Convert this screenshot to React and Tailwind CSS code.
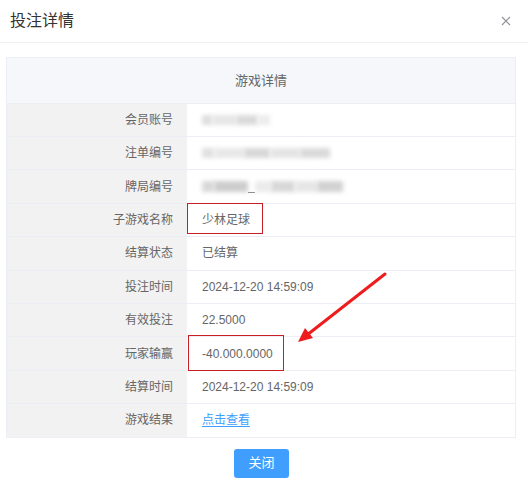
import React from "react";

const FONT = { fontFamily: '"Liberation Sans", "Noto Sans CJK SC", sans-serif' };

// blurred placeholder for masked values
const Masked = ({ parts }) => (
  <div className="flex items-center">
    {parts.map((p, i) => (
      <div
        key={i}
        className={`h-[10px] blur-[2px] ${p.c}`}
        style={{ width: p.w }}
      />
    ))}
  </div>
);

const rows = [
  {
    label: "会员账号",
    value: (
      <Masked
        parts={[
          { w: 10, c: "bg-[#dedede]" },
          { w: 24, c: "bg-[#e6e6e6]" },
          { w: 22, c: "bg-[#dadada]" },
          { w: 12, c: "bg-[#ececec]" },
        ]}
      />
    ),
  },
  {
    label: "注单编号",
    value: (
      <Masked
        parts={[
          { w: 12, c: "bg-[#e0e0e0]" },
          { w: 30, c: "bg-[#e8e8e8]" },
          { w: 26, c: "bg-[#d8d8d8]" },
          { w: 30, c: "bg-[#e4e4e4]" },
          { w: 30, c: "bg-[#dadada]" },
        ]}
      />
    ),
  },
  {
    label: "牌局编号",
    value: (
      <div className="flex items-center">
        <div className="h-[11px] w-[12px] bg-[#d8d8d8] blur-[2px]" />
        <div className="h-[11px] w-[34px] bg-[#cdcdcd] blur-[2px]" />
        <div className="mt-[12px] h-[1px] w-[7px] bg-[#8a8a8a]" />
        <div className="h-[11px] w-[16px] bg-[#ebebeb] blur-[2px]" />
        <div className="h-[11px] w-[24px] bg-[#d8d8d8] blur-[2px]" />
        <div className="h-[11px] w-[22px] bg-[#e6e6e6] blur-[2px]" />
        <div className="h-[11px] w-[26px] bg-[#d2d2d2] blur-[2px]" />
      </div>
    ),
  },
  { label: "子游戏名称", value: "少林足球" },
  { label: "结算状态", value: "已结算" },
  { label: "投注时间", value: "2024-12-20 14:59:09" },
  { label: "有效投注", value: "22.5000" },
  { label: "玩家输赢", value: "-40.000.0000" },
  { label: "结算时间", value: "2024-12-20 14:59:09" },
  {
    label: "游戏结果",
    value: (
      <a href="#" className="text-[#409eff] underline underline-offset-2">
        点击查看
      </a>
    ),
  },
];

export default function App() {
  return (
    <div className="relative w-[528px] h-[484px] bg-white text-[#666]" style={FONT}>
      {/* dialog header */}
      <div className="h-[43px] flex items-center justify-between pl-[10px] pr-[17px] border-b border-[#f0f0f0]">
        <span className="text-[16px] text-[#333] leading-none">投注详情</span>
        <svg width="10" height="10" viewBox="0 0 10 10" className="text-[#909399]">
          <path d="M1 1L9 9M9 1L1 9" stroke="currentColor" strokeWidth="1.1" />
        </svg>
      </div>

      {/* detail table */}
      <div className="pl-[6px] pr-[12px] pt-[14px]">
        <div className="border border-[#ebeef5]">
          <div className="h-[44.7px] flex items-center justify-center bg-[#f5f7fa] text-[13px]">
            游戏详情
          </div>
          {rows.map((r) => (
            <div key={r.label} className="flex h-[33.4px] border-t border-[#ebeef5] text-[12px]">
              <div className="w-[180px] shrink-0 bg-[#f2f2f2] flex items-center justify-end pr-[14px]">
                {r.label}
              </div>
              <div className="flex-1 flex items-center pl-[15px]">{r.value}</div>
            </div>
          ))}
        </div>

        <div className="flex justify-center mt-[11px] pl-[1px]">
          <button className="w-[55px] h-[29px] rounded-[3px] bg-[#409eff] text-white text-[13px]">
            关闭
          </button>
        </div>
      </div>

      {/* annotations drawn over the screenshot */}
      <div className="absolute left-[187px] top-[203px] w-[76px] h-[31px] border border-[#c81e24]" />
      <div className="absolute left-[188px] top-[335px] w-[96px] h-[36px] border border-[#c81e24]" />
      <svg className="absolute left-0 top-0" width="528" height="484" viewBox="0 0 528 484">
        <line x1="385" y1="274" x2="307" y2="335" stroke="#ee1c1c" strokeWidth="3" strokeLinecap="round" />
        <polygon points="298,342 305,328 313,338" fill="#ee1c1c" />
      </svg>
    </div>
  );
}
